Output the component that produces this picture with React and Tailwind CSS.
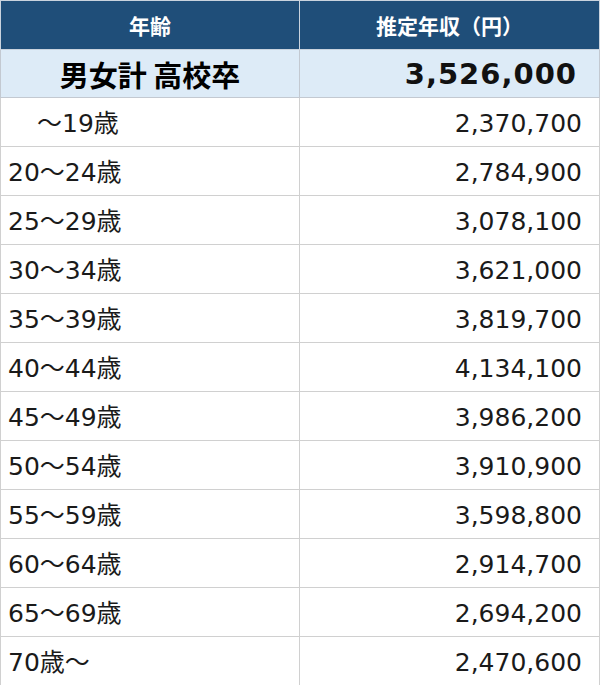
const rows = [
  ["～19歳", "2,370,700", true],
  ["20～24歳", "2,784,900"],
  ["25～29歳", "3,078,100"],
  ["30～34歳", "3,621,000"],
  ["35～39歳", "3,819,700"],
  ["40～44歳", "4,134,100"],
  ["45～49歳", "3,986,200"],
  ["50～54歳", "3,910,900"],
  ["55～59歳", "3,598,800"],
  ["60～64歳", "2,914,700"],
  ["65～69歳", "2,694,200"],
  ["70歳～", "2,470,600"],
];

export default function App() {
  return (
    <div
      className="w-[600px] bg-white text-[#1a1a1a]"
      style={{ fontFamily: '"DejaVu Sans", "Noto Sans CJK JP", sans-serif' }}
    >
      <table className="w-full border-collapse table-fixed">
        <thead>
          <tr
            className="h-[49px] bg-[#1f4e79] text-white text-[21px] font-bold"
            style={{ fontFamily: '"Noto Sans CJK JP", sans-serif' }}
          >
            <th className="w-[299px] border border-[#c9d3de] font-bold pt-[2px]">年齢</th>
            <th className="border border-[#c9d3de] font-bold pt-[2px]">推定年収（円）</th>
          </tr>
        </thead>
        <tbody>
          <tr className="h-[48px] bg-[#ddebf7] text-black">
            <td
              className="border border-[#c3c9d1] text-center text-[29px] font-bold pt-[2px]"
              style={{ fontFamily: '"Noto Sans CJK JP", sans-serif' }}
            >
              男女計 高校卒
            </td>
            <td className="border border-[#c3c9d1] text-right pr-[22px] text-[29px] font-bold tracking-[1px] pt-[2px] text-[#111]">
              3,526,000
            </td>
          </tr>
          {rows.map(([age, val, indent], i) => (
            <tr key={i} className="h-[49px] text-[25px]">
              <td className={`border border-[#d0d0d0] pt-[3px] ${indent ? "pl-[36px]" : "pl-[7px]"}`}>
                {age}
              </td>
              <td className="border border-[#d0d0d0] text-right pr-[17px] pt-[3px]">{val}</td>
            </tr>
          ))}
        </tbody>
      </table>
    </div>
  );
}
